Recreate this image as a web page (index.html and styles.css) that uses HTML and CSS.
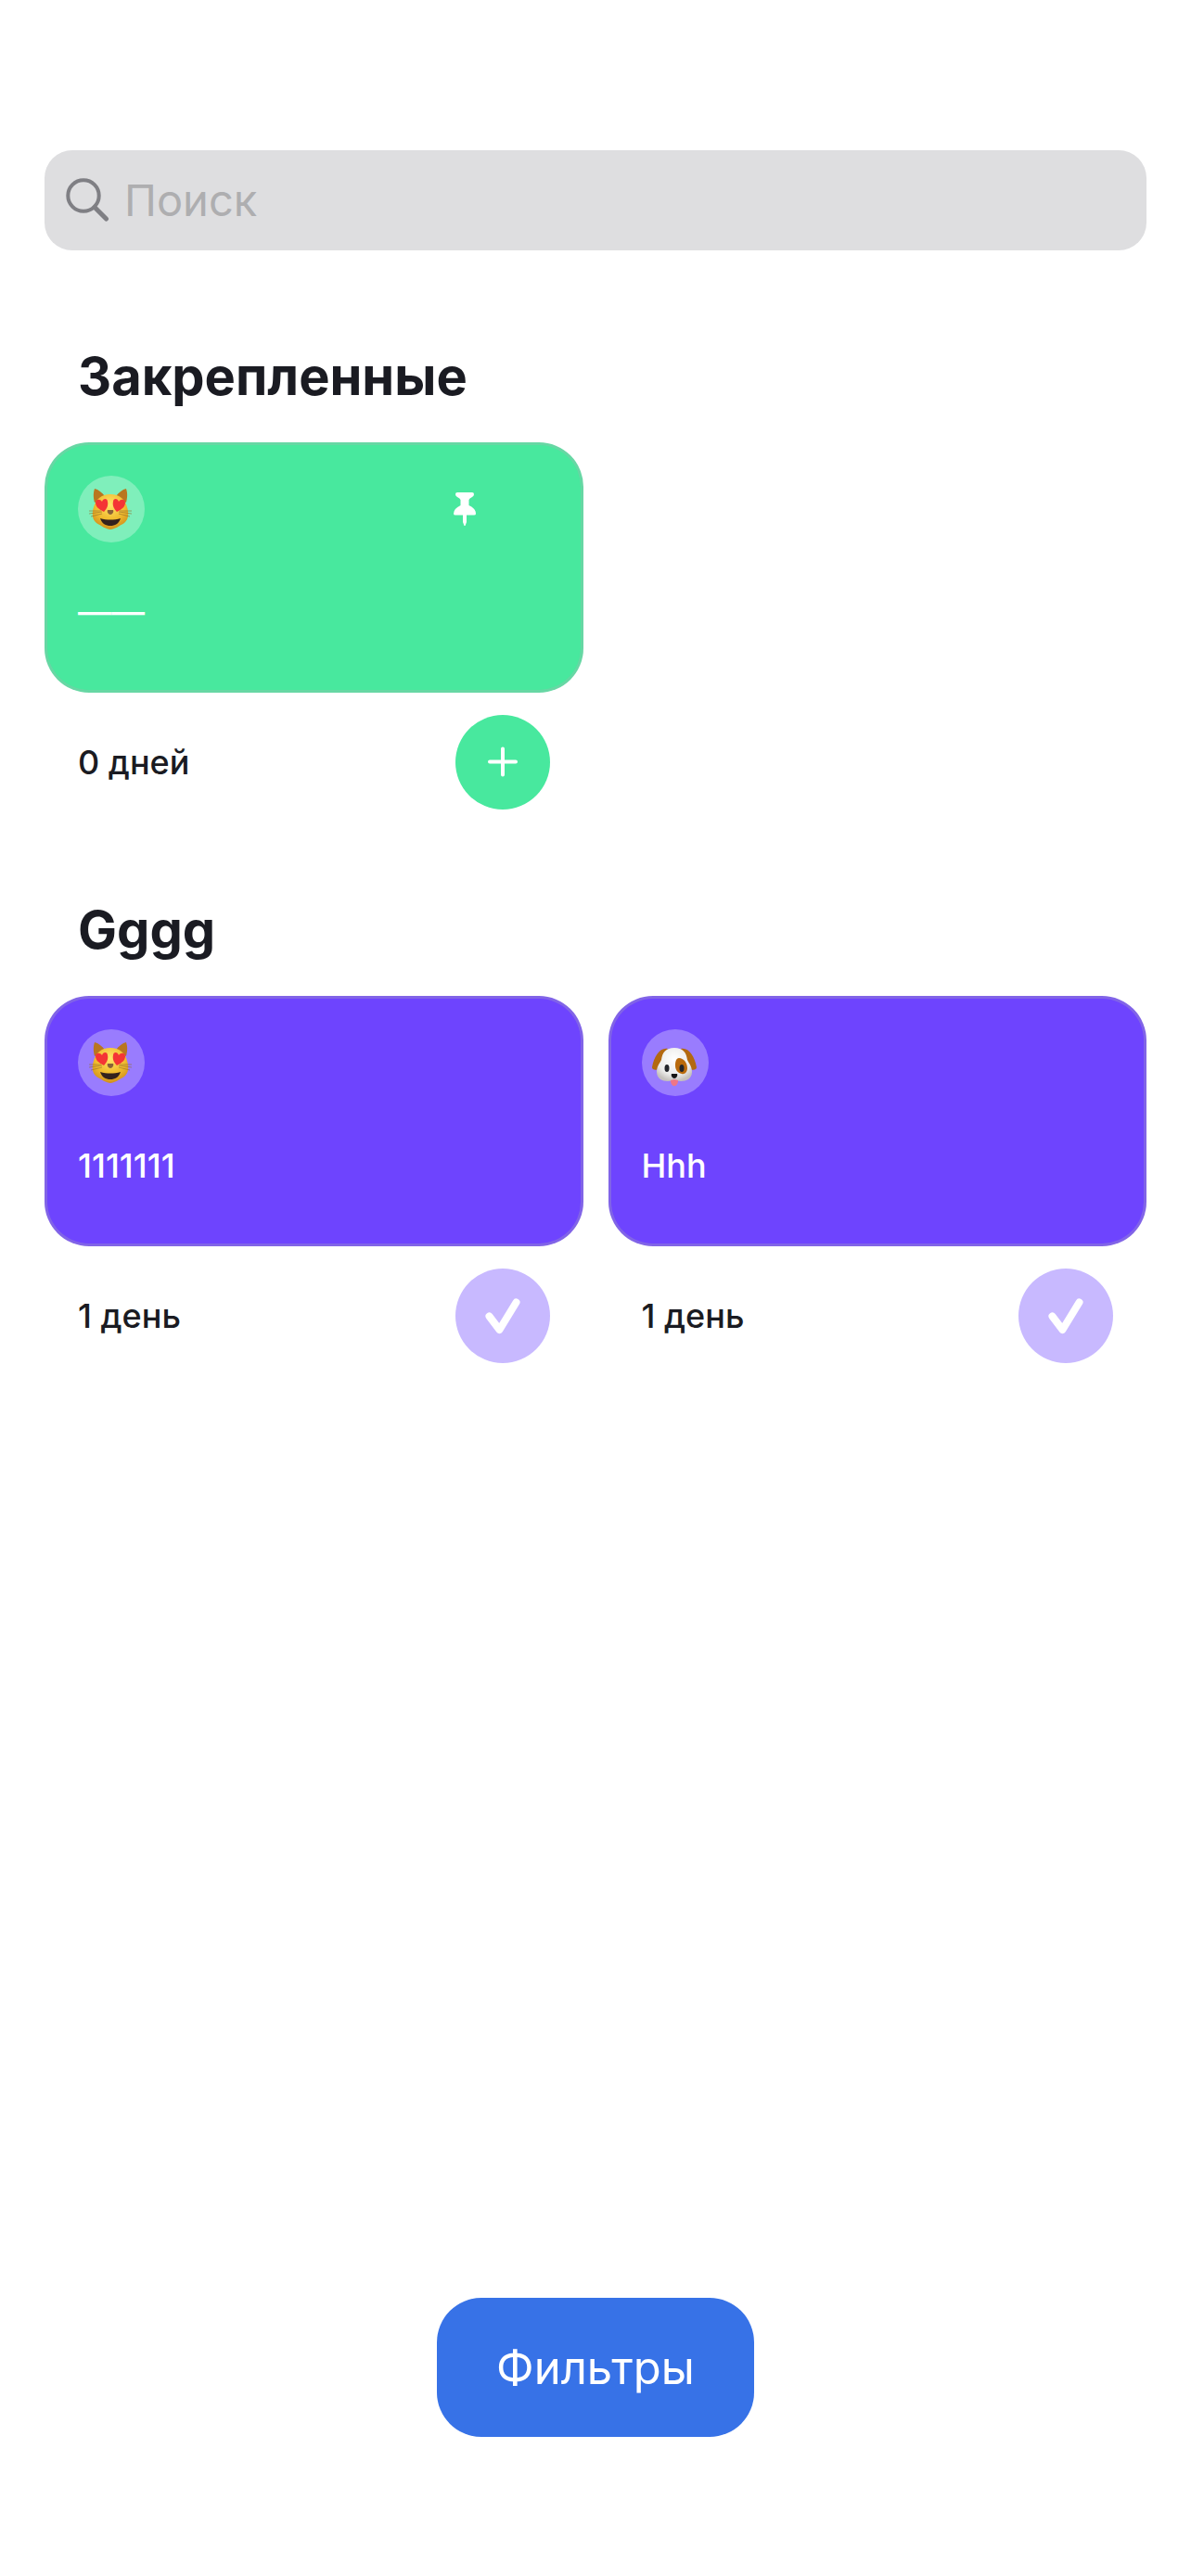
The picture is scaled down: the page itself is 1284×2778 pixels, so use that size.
FILE: index.html
```html
<!DOCTYPE html>
<html lang="ru">
<head>
<meta charset="utf-8">
<meta name="viewport" content="width=device-width, initial-scale=1">
<title>Трекеры</title>
<link rel="stylesheet" href="styles.css">
</head>
<body>
<svg class="sprite" aria-hidden="true">
  <defs>
    <radialGradient id="fur" cx="50%" cy="30%" r="70%">
      <stop offset="0" stop-color="#ffe56a"/>
      <stop offset="0.6" stop-color="#f0bb2e"/>
      <stop offset="1" stop-color="#d08f1c"/>
    </radialGradient>
    <radialGradient id="coat" cx="50%" cy="35%" r="65%">
      <stop offset="0" stop-color="#ffffff"/>
      <stop offset="0.7" stop-color="#ececea"/>
      <stop offset="1" stop-color="#c4c0bc"/>
    </radialGradient>
    <symbol id="cat" viewBox="0 0 72 72">
      <path d="M18 14 C16 20 17 25 18 29 L29 22 C26 18 22 15 18 14Z M52 14 C54 20 53 25 52 29 L41 22 C44 18 48 15 52 14Z" fill="#b9761f"/>
      <path d="M35 20 C45 20 51 26 53 34 C55 40 55 47 50 51 C45 54 39 58 35 58 C31 58 25 54 20 51 C15 47 15 40 17 34 C19 26 25 20 35 20Z" fill="url(#fur)"/>
      <path d="M12 41 L26 39 M12 38 L25 38 M14 44 L26 41 M58 41 L44 39 M58 38 L45 38 M56 44 L44 41" stroke="#94702c" stroke-width="1" opacity="0.6"/>
      <path d="M28 39 C22 36 19 33 19 29 C19 25 24 25 26 28 C27 24 32 24 32 28 C33 32 31 36 28 39Z M42 39 C48 36 51 33 51 29 C51 25 46 25 44 28 C43 24 38 24 38 28 C37 32 39 36 42 39Z" fill="#f43535"/>
      <path d="M32 37 H38 C39 39 37 42 35 42 C33 42 31 39 32 37Z" fill="#8a6238"/>
      <path d="M24 46 C31 48 39 48 46 46 C44 52 40 54 35 54 C30 54 26 52 24 46Z" fill="#33211d"/>
    </symbol>
    <symbol id="dog" viewBox="0 0 72 72">
      <path d="M28 21 C20 19 13 29 11 41 C11 44 16 45 19 42 L26 25Z M42 21 C50 19 57 29 59 41 C59 44 54 45 51 42 L44 25Z" fill="#b3690f"/>
      <path d="M35 20 C44 20 48 25 49 33 C51 37 54 40 54 46 C54 53 48 56 42 56 L35 55 L28 56 C22 56 16 53 16 46 C16 40 19 37 21 33 C22 25 26 20 35 20Z" fill="url(#coat)"/>
      <path d="M40 31 C45 31 49 36 49 42 C49 46 46 49 43 48 C38 47 36 43 36 39 C36 35 37 31 40 31Z" fill="#b96a0c"/>
      <ellipse cx="27" cy="42" rx="2.5" ry="4" fill="#24262b"/>
      <ellipse cx="43" cy="42" rx="2.5" ry="4" fill="#24262b"/>
      <path d="M32 48 H38 C39 50 37 53 35 53 C33 53 31 50 32 48Z" fill="#161616"/>
      <path d="M31 55 L35 54 L39 55 C39 59 37 61 35 61 C33 61 31 59 31 55Z" fill="#ef7686"/>
    </symbol>
  </defs>
</svg>

<main class="page">
  <label class="search">
    <svg class="search-icon" viewBox="0 0 48 48" aria-hidden="true">
      <circle cx="20" cy="19" r="16.7"/>
      <path class="handle" d="M32 31.5 L44.500 44"/>
    </svg>
    <input class="search-field" type="search" placeholder="Поиск" aria-label="Поиск">
  </label>

  <section class="category">
    <h2 class="category-title">Закрепленные</h2>
    <div class="grid">
      <article class="tracker green">
        <div class="card">
          <div class="card-top">
            <span class="emoji"><svg viewBox="0 0 72 72" role="img" aria-label="Кот"><use href="#cat"/></svg></span>
            <svg class="pin" viewBox="0 0 24 36" role="img" aria-label="Закреплено">
              <path d="M4 0 H20 Q22 0 22 2 Q22 4 20 5 Q17 6.500 16.500 8 V14 Q24 17.500 24 23 Q24 24.500 22 24.500 H14 V32 L12.500 36 H11.500 L10 32 V24.500 H2 Q0 24.500 0 23 Q0 17.500 7.500 14 V8 Q7 6.500 4 5 Q2 4 2 2 Q2 0 4 0Z"/>
            </svg>
          </div>
          <p class="name">——</p>
        </div>
        <div class="footer">
          <span class="days">0 дней</span>
          <button class="action" type="button" aria-label="Отметить">
            <svg viewBox="0 0 102 102" aria-hidden="true"><path class="plus" d="M37 50.500 H65 M51 36.500 V64.500"/></svg>
          </button>
        </div>
      </article>
    </div>
  </section>

  <section class="category">
    <h2 class="category-title">Gggg</h2>
    <div class="grid">
      <article class="tracker purple">
        <div class="card">
          <div class="card-top">
            <span class="emoji"><svg viewBox="0 0 72 72" role="img" aria-label="Кот"><use href="#cat"/></svg></span>
          </div>
          <p class="name">1111111</p>
        </div>
        <div class="footer">
          <span class="days">1 день</span>
          <button class="action done" type="button" aria-label="Выполнено">
            <svg viewBox="0 0 102 102" aria-hidden="true"><path class="check" d="M36.500 51.500 L47.500 66 L65.500 36.500"/></svg>
          </button>
        </div>
      </article>
      <article class="tracker purple">
        <div class="card">
          <div class="card-top">
            <span class="emoji"><svg viewBox="0 0 72 72" role="img" aria-label="Собака"><use href="#dog"/></svg></span>
          </div>
          <p class="name">Hhh</p>
        </div>
        <div class="footer">
          <span class="days">1 день</span>
          <button class="action done" type="button" aria-label="Выполнено">
            <svg viewBox="0 0 102 102" aria-hidden="true"><path class="check" d="M36.500 51.500 L47.500 66 L65.500 36.500"/></svg>
          </button>
        </div>
      </article>
    </div>
  </section>

  <button class="filters" type="button">Фильтры</button>
</main>
</body>
</html>
```
FILE: styles.css
```css
* {
  box-sizing: border-box;
}

body {
  margin: 0;
  background: #fff;
  color: #1a1b22;
  font-family: Inter, "Noto Sans", sans-serif;
}

.sprite {
  position: absolute;
  width: 0;
  height: 0;
}

.page {
  display: flex;
  flex-direction: column;
  min-height: 100vh;
  padding: 162px 48px 150px;
}

.search {
  display: flex;
  align-items: center;
  gap: 16px;
  height: 108px;
  margin-bottom: 48px;
  padding: 0 22px;
  border-radius: 30px;
  background: #dedee0;
}

.search-icon {
  flex: none;
  width: 48px;
  height: 48px;
  fill: none;
  stroke: #7f7f84;
  stroke-width: 4;
  stroke-linecap: round;
}

.search-icon .handle {
  stroke-width: 5;
}

.search-field {
  flex: 1;
  min-width: 0;
  padding: 0;
  border: 0;
  outline: 0;
  background: transparent;
  color: #1a1b22;
  font: 400 47px/60px Inter, "Noto Sans", sans-serif;
  appearance: none;
}

.search-field::placeholder {
  color: #aeaeb0;
  opacity: 1;
}

.category {
  padding-top: 54px;
}

.category + .category {
  padding-top: 96px;
}

.category-title {
  margin: 0 36px 36px;
  font-size: 56px;
  font-weight: 700;
  line-height: 69px;
}

.grid {
  display: grid;
  grid-template-columns: 1fr 1fr;
  gap: 27px;
}

.green {
  --tint: #48e89e;
}

.purple {
  --tint: #6e44fe;
}

.card {
  display: flex;
  flex-direction: column;
  justify-content: space-between;
  min-height: 270px;
  padding: 33px 33px 57px;
  border: 3px solid rgba(174, 175, 180, 0.3);
  border-radius: 48px;
  background: var(--tint);
  background-clip: border-box;
  color: #fff;
}

.card-top {
  display: flex;
  align-items: center;
  justify-content: space-between;
}

.emoji {
  width: 72px;
  height: 72px;
  border-radius: 50%;
  background: rgba(255, 255, 255, 0.3);
}

.emoji svg,
.action svg {
  display: block;
  width: 100%;
  height: 100%;
}

.pin {
  width: 24px;
  height: 36px;
  margin-right: 80px;
  fill: #fff;
}

.name {
  margin: 0;
  font-size: 36px;
  font-weight: 500;
  line-height: 54px;
}

.footer {
  display: flex;
  align-items: center;
  justify-content: space-between;
  padding: 24px 36px 0;
}

.days {
  font-size: 36px;
  font-weight: 500;
  line-height: 54px;
}

.action {
  width: 102px;
  height: 102px;
  padding: 0;
  border: 0;
  border-radius: 50%;
  background: var(--tint);
}

.action.done {
  background: #c8b9ff;
}

.action path {
  fill: none;
  stroke: #fff;
  stroke-linecap: round;
  stroke-linejoin: round;
}

.action .plus {
  stroke-width: 4;
}

.action .check {
  stroke-width: 8;
}

.filters {
  align-self: center;
  min-width: 342px;
  height: 150px;
  margin-top: auto;
  padding: 2px 60px 0;
  border: 0;
  border-radius: 48px;
  background: #3772e7;
  color: #fff;
  font: 400 49px/66px Inter, "Noto Sans", sans-serif;
}
```
